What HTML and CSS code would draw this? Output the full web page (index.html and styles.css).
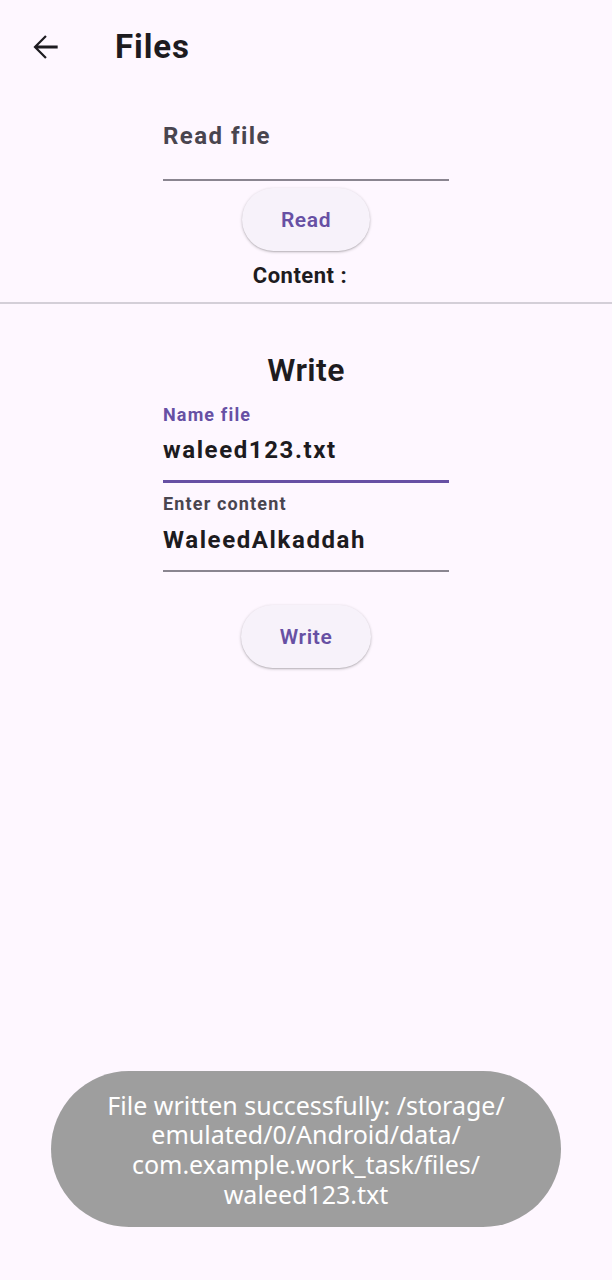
FILE: index.html
```html
<!DOCTYPE html>
<html lang="en">
<head>
<meta charset="utf-8">
<title>Files</title>
<link rel="stylesheet" href="styles.css">
</head>
<body>
<div class="screen">
  <header class="appbar">
    <button class="back" aria-label="Back">
      <svg viewBox="0 0 24 24"><path d="M20 11.1H7.6l5.5-5.5L12.1 4.6 4.7 12l7.4 7.4 1-1-5.5-5.5H20v-1.8z" fill="#1d1b20"/></svg>
    </button>
    <h1 class="title">Files</h1>
  </header>

  <section class="read">
    <div class="field">
      <div class="hint">Read file</div>
      <div class="line"></div>
    </div>
    <button class="pill">Read</button>
    <div class="content-label">Content :</div>
  </section>

  <hr class="divider">

  <section class="write">
    <h2 class="heading">Write</h2>
    <div class="field filled focused">
      <div class="label purple">Name file</div>
      <div class="value">waleed123.txt</div>
      <div class="line"></div>
    </div>
    <div class="field filled">
      <div class="label">Enter content</div>
      <div class="value">WaleedAlkaddah</div>
      <div class="line"></div>
    </div>
    <button class="pill write-btn">Write</button>
  </section>

  <div class="toast">File written successfully: /storage/<br>emulated/0/Android/data/<br>com.example.work_task/files/<br>waleed123.txt</div>
</div>
</body>
</html>
```

FILE: styles.css
```css
* { box-sizing: border-box; }
html, body { margin: 0; padding: 0; }
body {
  background: #fef7ff;
  font-family: Roboto, "Liberation Sans", sans-serif;
  color: #1d1b20;
}
.screen {
  position: relative;
  width: 612px;
  height: 1280px;
  display: flex;
  flex-direction: column;
  align-items: center;
}
.appbar {
  width: 100%;
  height: 94px;
  display: flex;
  align-items: center;
  padding-left: 26px;
}
.back {
  width: 38px;
  height: 38px;
  border: 0;
  background: none;
  padding: 0;
  display: flex;
  align-items: center;
  justify-content: center;
}
.back svg { width: 38px; height: 38px; display: block; }
.title {
  margin: 0 0 0 51px;
  font-size: 33px;
  line-height: 40px;
  font-weight: 700;
  letter-spacing: 0.9px;
  color: #1d1b20;
}
.read, .write {
  width: 286px;
  display: flex;
  flex-direction: column;
  align-items: center;
}
.field {
  width: 100%;
  display: flex;
  flex-direction: column;
}
.hint {
  padding-top: 27px;
  height: 85px;
  font-size: 24px;
  line-height: 30px;
  font-weight: 700;
  color: #49454f;
  letter-spacing: 1.45px;
}
.line {
  height: 2px;
  background: #8a8590;
}
.pill {
  border: 0;
  margin-top: 7px;
  width: 128px;
  height: 63px;
  border-radius: 32px;
  background: #f7f2fa;
  box-shadow: 0 1px 3px rgba(0,0,0,0.25), 0 1px 1px rgba(0,0,0,0.08);
  font-family: Roboto, "Liberation Sans", sans-serif;
  font-size: 21px;
  font-weight: 600;
  color: #6750a4;
  letter-spacing: 0.6px;
  padding: 0;
}
.content-label {
  margin-top: 11px;
  padding-right: 12px;
  font-size: 22px;
  font-weight: 700;
  color: #1d1b20;
  letter-spacing: 0.5px;
  line-height: 28px;
}
.divider {
  width: 100%;
  margin: 12px 0 0;
  border: 0;
  height: 2px;
  background: #d4cfd8;
}
.heading {
  margin: 46px 0 0;
  font-size: 32px;
  font-weight: 600;
  line-height: 40px;
  letter-spacing: 0.4px;
}
.filled .label {
  margin-top: 10px;
  font-size: 18px;
  font-weight: 700;
  color: #49454f;
  letter-spacing: 1.15px;
  line-height: 22px;
}
.filled .label.purple { color: #6750a4; margin-top: 14px; }
.filled .value {
  margin-top: 10px;
  font-size: 24px;
  font-weight: 700;
  letter-spacing: 1.6px;
  line-height: 30px;
  height: 45px;
}
.focused .value { margin-top: 9px; }
.focused .line {
  height: 3px;
  background: #6750a4;
}
.write-btn { margin-top: 33px; width: 130px; }
.toast {
  position: absolute;
  left: 51px;
  top: 1071px;
  width: 510px;
  height: 156px;
  border-radius: 78px;
  background: #9e9e9e;
  color: #ffffff;
  font-family: "Noto Sans", "Open Sans", sans-serif;
  font-size: 25px;
  line-height: 29.7px;
  text-align: center;
  display: flex;
  align-items: center;
  justify-content: center;
  padding-top: 2px;
}
```
